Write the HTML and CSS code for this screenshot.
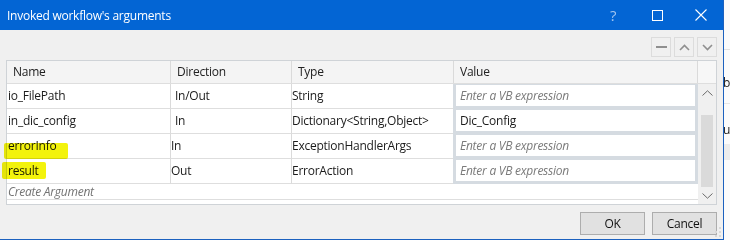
FILE: index.html
```html
<!DOCTYPE html>
<html>
<head>
<meta charset="utf-8">
<link rel="stylesheet" href="styles.css">
</head>
<body>
<div class="window">
  <div class="titlebar">
    <span class="title">Invoked workflow's arguments</span>
    <div class="caps">
      <span class="cap help">?</span>
      <span class="cap"><svg width="11" height="11" viewBox="0 0 11 11"><rect x="0.5" y="0.5" width="10" height="10" fill="none" stroke="#fff" stroke-width="1"/></svg></span>
      <span class="cap"><svg width="12" height="12" viewBox="0 0 12 12"><path d="M0.5 0.5L11.5 11.5M11.5 0.5L0.5 11.5" stroke="#fff" stroke-width="1.1" fill="none"/></svg></span>
    </div>
  </div>
  <div class="content">
    <div class="toolbar">
      <span class="tbtn"><svg width="11" height="3" viewBox="0 0 11 3"><rect x="0" y="0" width="11" height="2" fill="#8f8f8f"/></svg></span>
      <span class="tbtn"><svg width="11" height="7" viewBox="0 0 11 7"><path d="M1 6L5.5 1.5L10 6" stroke="#8f8f8f" stroke-width="1.6" fill="none"/></svg></span>
      <span class="tbtn"><svg width="11" height="7" viewBox="0 0 11 7"><path d="M1 1L5.5 5.5L10 1" stroke="#8f8f8f" stroke-width="1.6" fill="none"/></svg></span>
    </div>
    <div class="grid">
      <div class="head">
        <div class="hc">Name</div>
        <div class="hc">Direction</div>
        <div class="hc">Type</div>
        <div class="hc">Value</div>
        <div class="hc blank"></div>
      </div>
      <div class="bodyarea">
        <div class="rows">
          <div class="row">
            <div class="cell name">io_FilePath</div>
            <div class="cell dir combo">In/Out</div>
            <div class="cell type">String</div>
            <div class="value"><div class="inp ph">Enter a VB expression</div></div>
          </div>
          <div class="row">
            <div class="cell name">in_dic_config</div>
            <div class="cell dir combo">In</div>
            <div class="cell type">Dictionary&lt;String,Object&gt;</div>
            <div class="value"><div class="inp">Dic_Config</div></div>
          </div>
          <div class="row">
            <div class="cell name">errorInfo</div>
            <div class="cell dir">In</div>
            <div class="cell type">ExceptionHandlerArgs</div>
            <div class="value"><div class="inp ph">Enter a VB expression</div></div>
          </div>
          <div class="row">
            <div class="cell name">result</div>
            <div class="cell dir">Out</div>
            <div class="cell type">ErrorAction</div>
            <div class="value"><div class="inp ph">Enter a VB expression</div></div>
          </div>
          <div class="create">Create Argument</div>
        </div>
        <div class="vscroll">
          <div class="sbtn"><svg width="11" height="6" viewBox="0 0 11 6"><path d="M0.5 5.5L5.5 0.8L10.5 5.5" stroke="#6a6a6a" stroke-width="1" fill="none"/></svg></div>
          <div class="track"><div class="thumb"></div></div>
          <div class="sbtn"><svg width="11" height="6" viewBox="0 0 11 6"><path d="M0.5 0.5L5.5 5.2L10.5 0.5" stroke="#6a6a6a" stroke-width="1" fill="none"/></svg></div>
        </div>
      </div>
    </div>
    <div class="footer">
      <button class="btn">OK</button>
      <button class="btn">Cancel</button>
    </div>
  </div>
  <div class="hl hl1"></div>
  <div class="hl hl2"></div>
  <svg class="grip" width="6" height="10" viewBox="0 0 6 10"><g fill="#d8d8d8"><rect x="4" y="0" width="2" height="2"/><rect x="4" y="4" width="2" height="2"/><rect x="0" y="4" width="2" height="2"/><rect x="4" y="8" width="2" height="2"/><rect x="0" y="8" width="2" height="2"/></g></svg>
</div>
<div class="bgstrip">
  <div class="s1"></div>
  <div class="s2">bl</div>
  <div class="s3">ue</div>
  <div class="s4"></div>
</div>
</body>
</html>
```

FILE: styles.css
```css
* { box-sizing: border-box; }
html, body { margin: 0; padding: 0; }
body {
  width: 730px;
  height: 240px;
  overflow: hidden;
  display: flex;
  background: #fafafa;
  font-family: "Open Sans", "Segoe UI", sans-serif;
  font-size: 12px;
  letter-spacing: -0.25px;
  color: #1b1b1b;
}
.window {
  position: relative;
  flex: none;
  width: 724px;
  height: 240px;
  background: #f0f0f0;
  border-right: 1px solid #1c61bf;
  border-bottom: 1px solid #1c61bf;
  display: flex;
  flex-direction: column;
}
.titlebar {
  flex: none;
  height: 30px;
  background: #0365d4;
  color: #fff;
  display: flex;
  align-items: center;
  padding-left: 7px;
}
.title { font-size: 12px; }
.caps { margin-left: auto; display: flex; height: 30px; }
.cap {
  width: 44px;
  display: flex;
  align-items: center;
  justify-content: center;
}
.help { color: #a3c5ef; font-size: 15px; }
.content {
  flex: 1;
  display: flex;
  flex-direction: column;
  padding: 7px 6px 0 6px;
}
.toolbar {
  height: 20px;
  display: flex;
  justify-content: flex-end;
  gap: 3px;
}
.tbtn {
  width: 20px;
  height: 20px;
  border: 1px solid #dcdcdc;
  display: flex;
  align-items: center;
  justify-content: center;
}
.grid {
  margin-top: 3px;
  height: 145px;
  border: 1px solid #cfd3d7;
  background: #fff;
  display: flex;
  flex-direction: column;
}
.head {
  height: 23px;
  display: grid;
  grid-template-columns: 164px 121px 162px 244px 18px;
  background: #f4f4f4;
  border-bottom: 1px solid #dedede;
}
.hc {
  padding-left: 6px;
  line-height: 22px;
  border-right: 1px solid #dadada;
  color: #222;
}
.hc.blank { border-right: none; background: #f7f7f7; }
.bodyarea { flex: 1; display: flex; }
.rows { width: 691px; display: flex; flex-direction: column; }
.row {
  height: 25px;
  display: grid;
  grid-template-columns: 164px 121px 161px 245px;
}
.cell {
  border-bottom: 1px solid #dedede;
  border-right: 1px solid #dadada;
  line-height: 24px;
  white-space: nowrap;
  overflow: hidden;
}
.cell.name { padding-left: 1px; }
.cell.dir { padding-left: 0; }
.cell.dir.combo { padding-left: 4px; }
.cell.type { padding-left: 0; border-right: none; }
.value {
  background: #d5dbe1;
  padding: 1px 3px 3px 3px;
}
.inp {
  height: 21px;
  background: #fff;
  padding-left: 4px;
  line-height: 21px;
  white-space: nowrap;
}
.inp.ph { font-style: italic; color: #7a7a7a; }
.create {
  height: 16px;
  line-height: 15px;
  padding-left: 1px;
  font-style: italic;
  color: #737373;
  border-bottom: 1px solid #dedede;
}
.vscroll {
  width: 18px;
  background: #f0f0f0;
  display: flex;
  flex-direction: column;
}
.sbtn {
  height: 17px;
  display: flex;
  align-items: center;
  justify-content: center;
}
.track { flex: 1; padding: 14px 3px 0 3px; }
.thumb { height: 72px; background: #dadada; }
.footer {
  margin-top: 7px;
  display: flex;
  justify-content: flex-end;
  gap: 7px;
}
.btn {
  width: 65px;
  height: 23px;
  background: #e1e1e1;
  border: 1px solid #adadad;
  font-family: "Open Sans", "Segoe UI", sans-serif;
  font-size: 12px;
  letter-spacing: -0.25px;
  color: #111;
  padding: 0;
}
.hl {
  position: absolute;
  background: #f3f30c;
  mix-blend-mode: multiply;
  border-radius: 2px;
}
.hl1 { left: 4px; top: 143px; width: 64px; height: 16px; }
.hl2 { left: 2px; top: 162px; width: 44px; height: 17px; }
.grip { position: absolute; right: 2px; bottom: 2px; }
.bgstrip {
  flex: none;
  width: 6px;
  height: 240px;
  overflow: hidden;
  background: #fbfbfb;
  display: flex;
  flex-direction: column;
  letter-spacing: 0;
}
.s1 { height: 50px; border-bottom: 1px solid #e2e2e2; }
.s2 { height: 54px; line-height: 66px; margin-left: -1px; border-bottom: 1px solid #e6e6e6; color: #222; }
.s3 { height: 40px; line-height: 52px; margin-left: -1px; color: #222; }
.s4 { height: 16px; background: #ececec; }
```
